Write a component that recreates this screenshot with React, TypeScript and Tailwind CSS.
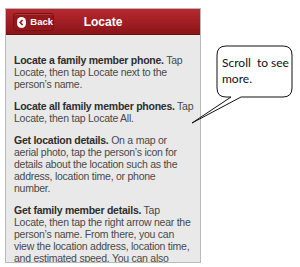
const sections = [
  {
    lines: [
      [<b key="t">Locate a family member phone.</b>, ' Tap'],
      ['Locate, then tap Locate next to the'],
      ['person\u2019s name.'],
    ],
  },
  {
    lines: [
      [<b key="t">Locate all family member phones.</b>, ' Tap'],
      ['Locate, then tap Locate All.'],
    ],
  },
  {
    lines: [
      [<b key="t">Get location details.</b>, ' On a map or'],
      ['aerial photo, tap the person\u2019s icon for'],
      ['details about the location such as the'],
      ['address, location time, or phone'],
      ['number.'],
    ],
  },
  {
    lines: [
      [<b key="t">Get family member details.</b>, ' Tap'],
      ['Locate, then tap the right arrow near the'],
      ['person\u2019s name. From there, you can'],
      ['view the location address, location time,'],
      ['and estimated speed. You can also'],
    ],
  },
];

export default function App() {
  return (
    <div className="relative w-[300px] h-[267px] bg-white overflow-hidden">
      <div className="pt-[8px] pl-[5px]">
        {/* Phone screen */}
        <div className="w-[196px] h-[255px] flex flex-col border border-[#b9b9b9] overflow-hidden">
          {/* Nav bar */}
          <div className="relative h-[26px] shrink-0 flex items-center justify-center bg-gradient-to-b from-[#b8292f] to-[#8a1418] border-b border-[#6e0f12]">
            <button className="absolute left-[7px] top-[4px] h-[18px] w-[41px] flex items-center gap-[4px] pl-[3px] rounded-[3px] bg-[#93181c] border border-[#7a1014] shadow-[inset_0_1px_0_rgba(255,255,255,0.15)]">
              <span className="w-[11px] h-[11px] rounded-full bg-white flex items-center justify-center">
                <svg width="7" height="7" viewBox="0 0 7 7">
                  <path d="M4.6 1 L2.2 3.5 L4.6 6" stroke="#9b1b1f" strokeWidth="1.7" fill="none" />
                </svg>
              </span>
              <span className="text-white text-[9.5px] font-bold leading-none font-['Liberation_Sans',Arial,sans-serif]">Back</span>
            </button>
            <span className="text-white text-[12px] font-bold font-['Liberation_Sans',Arial,sans-serif]">Locate</span>
          </div>
          {/* Content */}
          <div className="flex-1 bg-[#e9e9e9] pt-[19px] pl-[8px] flex flex-col gap-[10px] font-['Liberation_Sans',Arial,sans-serif] text-[10.5px] leading-[12px] tracking-[-0.25px] text-[#4a4a4a]">
            {sections.map((s, i) => (
              <div key={i}>
                {s.lines.map((l, j) => (
                  <p key={j} className="whitespace-nowrap [&>b]:text-[#2e2e2e]">
                    {l}
                  </p>
                ))}
              </div>
            ))}
          </div>
        </div>
      </div>

      {/* Callout */}
      <svg className="absolute left-0 top-0 pointer-events-none" width="300" height="267">
        <path
          d="M226 46 H283 Q292 46 292 55 V88 Q292 97 283 97 H241 L192 123 L231 97 H226 Q217 97 217 88 V55 Q217 46 226 46 Z"
          fill="white"
          stroke="#111"
          strokeWidth="1"
        />
      </svg>
      <div className="absolute left-[222px] top-[55px] text-[12px] leading-[16px] text-[#111] font-['Lato',sans-serif]">
        Scroll&nbsp; to see
        <br />
        more.
      </div>
    </div>
  );
}
